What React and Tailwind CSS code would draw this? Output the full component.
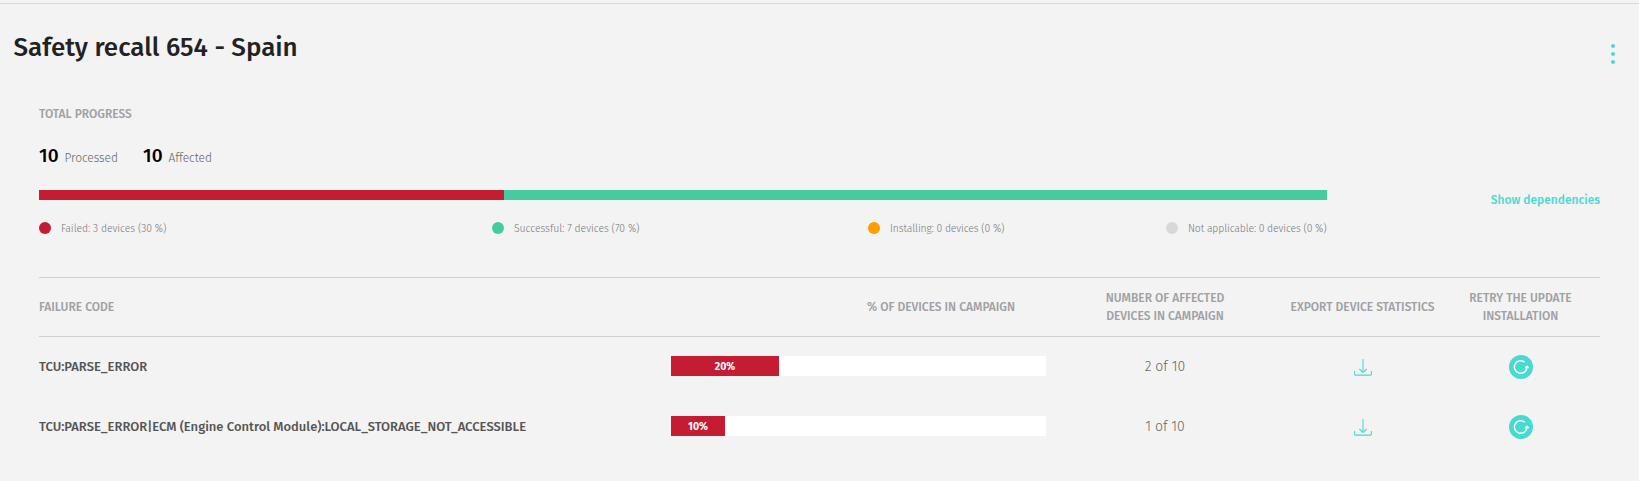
const legend = [
  { text: 'Failed: 3 devices (30 %)', dot: 'bg-[#c41c33]', cell: 'w-[453px] tracking-[-0.04px]' },
  { text: 'Successful: 7 devices (70 %)', dot: 'bg-[#45cb9f]', cell: 'w-[376px] tracking-[-0.03px]' },
  { text: 'Installing: 0 devices (0 %)', dot: 'bg-[#fd9d00]', cell: 'w-[298px] tracking-[-0.11px]' },
  { text: 'Not applicable: 0 devices (0 %)', dot: 'bg-[#d8d8d8]', cell: 'w-[161px] tracking-[-0.12px]' },
];

const failures = [
  { code: 'TCU:PARSE_ERROR', percent: '20%', affected: '2 of 10', bar: 'w-[108px]' },
  {
    code: 'TCU:PARSE_ERROR|ECM (Engine Control Module):LOCAL_STORAGE_NOT_ACCESSIBLE',
    percent: '10%',
    affected: '1 of 10',
    bar: 'w-[54px]',
  },
];

const columns = 'grid grid-cols-[632px_375px_238px_157px_159px] items-center';

function MoreIcon() {
  return (
    <svg width="4" height="20" viewBox="0 0 4 20" fill="#48dad0" className="block">
      <circle cx="2" cy="2" r="2" />
      <circle cx="2" cy="10" r="2" />
      <circle cx="2" cy="18" r="2" />
    </svg>
  );
}

function DownloadIcon() {
  return (
    <svg width="18" height="17" viewBox="0 0 18 17" fill="none" stroke="#48dad0" className="block">
      <path d="M9 0v13.3" strokeWidth="1.1" />
      <path d="M5.4 10 9 13.4 12.6 10" strokeWidth="1.1" />
      <path d="M.6 12v3.2q0 .9.9.9h15q.9 0 .9-.9V12" strokeWidth="1.1" />
    </svg>
  );
}

function RetryIcon() {
  return (
    <svg width="24" height="24" viewBox="0 0 24 24" fill="none" className="block">
      <circle cx="12" cy="12" r="12" fill="#48dad0" />
      <path d="M15.8 7.2A6.3 6.3 0 1 0 18 12.4" stroke="#fff" strokeWidth="1.4" />
      <path d="M18 10.3 20.6 13.3H15.4Z" fill="#fff" />
    </svg>
  );
}

function Stat({ value, label }) {
  return (
    <div className="flex items-baseline gap-[5.5px]">
      <span className="text-[19px] leading-6 font-medium tracking-[0.3px] text-black">{value}</span>
      <span className="text-xs leading-none font-light tracking-[-0.05px] text-[#666]">{label}</span>
    </div>
  );
}

export default function App() {
  return (
    <div className="h-[481px] w-[1639px] overflow-hidden bg-[#f3f3f3] pt-[3px] font-['Fira_Sans','Noto_Sans',sans-serif] whitespace-nowrap">
      <header className="flex h-[102px] items-start justify-between border-t border-[#dcdcdc] pr-6 pl-[13.5px]">
        <h1 className="mt-7 text-[26px] leading-8 font-medium tracking-[-0.02px] text-[#222]">Safety recall 654 - Spain</h1>
        <button className="mt-10">
          <MoreIcon />
        </button>
      </header>

      <main className="pr-[39px] pl-[39px]">
        <section className="h-[172px]">
          <h2 className="text-xs leading-[18px] font-medium text-[#a0a0a4]">TOTAL PROGRESS</h2>
          <div className="mt-[21px] flex gap-[25px]">
            <Stat value="10" label="Processed" />
            <Stat value="10" label="Affected" />
          </div>
          <div className="mt-[22px] flex items-start justify-between">
            <div className="w-[1288px]">
              <div className="flex h-[10px] bg-[#45cb9f]">
                <div className="w-[465px] bg-[#c41c33]" />
              </div>
              <ul className="mt-[22px] flex text-[10.4px] leading-3 font-light text-[#77777c]">
                {legend.map((item) => (
                  <li key={item.text} className={`flex items-start gap-[10px] ${item.cell}`}>
                    <span className={`size-3 shrink-0 rounded-full ${item.dot}`} />
                    <span className="pt-px">{item.text}</span>
                  </li>
                ))}
              </ul>
            </div>
            <a className="mt-[2px] text-xs leading-4 font-medium text-[#48dad0]">Show dependencies</a>
          </div>
        </section>

        <section>
          <div className={`${columns} h-[60px] border-y border-[#d0d0d0] text-center text-xs leading-[18px] font-medium text-[#a0a0a4]`}>
            <span className="text-left">FAILURE CODE</span>
            <span className="pr-[31px] text-right">% OF DEVICES IN CAMPAIGN</span>
            <span>
              NUMBER OF AFFECTED
              <br />
              DEVICES IN CAMPAIGN
            </span>
            <span>EXPORT DEVICE STATISTICS</span>
            <span>
              RETRY THE UPDATE
              <br />
              INSTALLATION
            </span>
          </div>
          {failures.map((row) => (
            <div key={row.code} className={`${columns} h-[60px]`}>
              <span className="text-[13px] leading-5 font-medium text-[#555]">{row.code}</span>
              <div className="mb-[2px] h-5 bg-white">
                <div className={`flex h-5 justify-center bg-[#c41c33] text-[10.4px] leading-[21px] font-bold text-white ${row.bar}`}>
                  {row.percent}
                </div>
              </div>
              <span className="text-center text-[14px] leading-5 font-light text-[#666]">{row.affected}</span>
              <div className="flex justify-center pt-px">
                <DownloadIcon />
              </div>
              <div className="flex justify-center">
                <RetryIcon />
              </div>
            </div>
          ))}
        </section>
      </main>
    </div>
  );
}
